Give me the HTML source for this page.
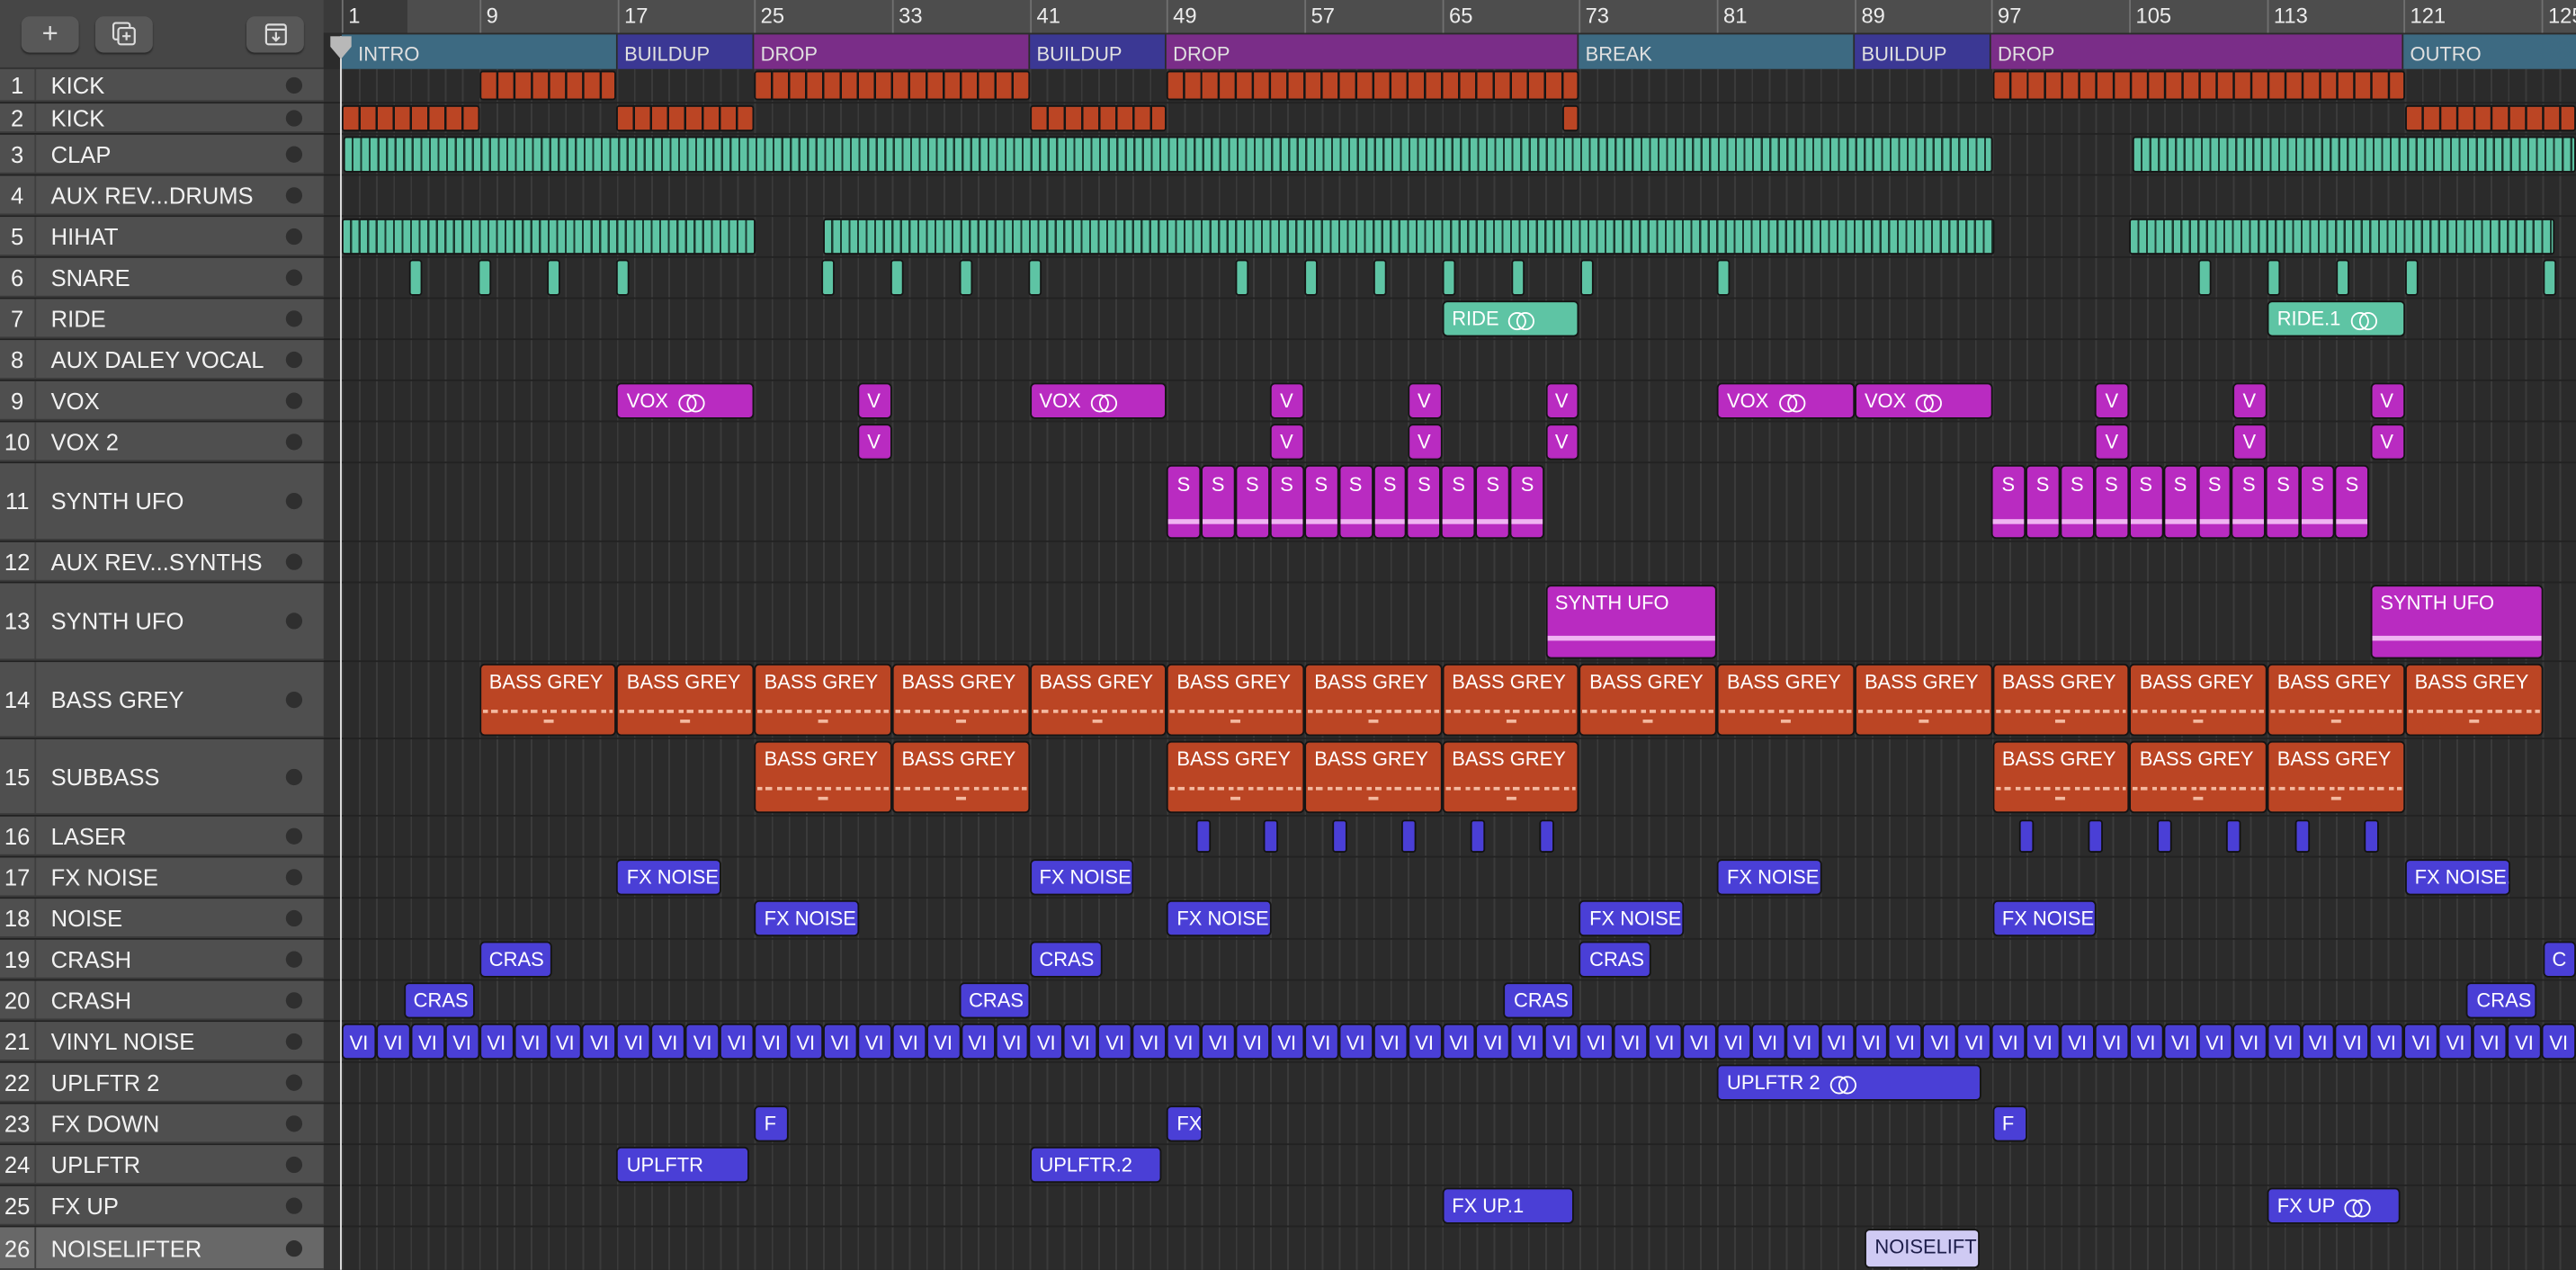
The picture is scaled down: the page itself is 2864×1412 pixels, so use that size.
<!DOCTYPE html>
<html><head><meta charset="utf-8"><style>
*{box-sizing:border-box;margin:0;padding:0}
html,body{width:2864px;height:1412px;overflow:hidden;background:#2b2b2b}
#root{position:absolute;left:0;top:0;width:1568px;height:773px;transform:scale(1.82653);transform-origin:0 0;font-family:"Liberation Sans",sans-serif;background:#2b2b2b;overflow:hidden}
#grid{position:absolute;left:208px;top:42px;right:0;bottom:0;background:repeating-linear-gradient(90deg,#3b3b3b 0 1px,transparent 1px 10.465px)}
.row{position:absolute;left:0;width:1568px;border-bottom:1px solid #222}
.hd{position:absolute;left:0;top:0;bottom:0;width:197px;background:#4f4f4f;border-bottom:1px solid #3a3a3a;color:#f2f2f2;font-size:14px}
.hd .n{position:absolute;left:0;width:22px;top:0;bottom:0;border-right:1px solid #3e3e3e;text-align:center;display:flex;align-items:center;justify-content:center}
.hd .t{position:absolute;left:31px;top:0;bottom:0;display:flex;align-items:center;white-space:nowrap}
.hd .d{position:absolute;left:174px;top:50%;margin-top:-5px;width:10px;height:10px;border-radius:50%;background:#2f2f2f}
.g{position:absolute;top:1px;bottom:1px;left:calc(208px + (var(--b) - 1)*10.465px);width:calc(var(--w)*10.465px);border:1px solid #141414;border-radius:3px;color:#fff;font-size:12px;padding:3px 0 0 5px;white-space:nowrap;overflow:hidden}
.o{background:#bb4524}.m{background:#b92bc1}.b{background:#4a3fd6}.tq{background:#5ec4a4}
.kk{position:absolute;top:1px;bottom:1px;left:calc(208px + (var(--b) - 1)*10.465px);width:calc(var(--w)*10.465px);background:repeating-linear-gradient(90deg,#bb4524 0 9.1px,#151515 9.1px 10.465px);border:1px solid #151515;border-radius:2px}
.st{position:absolute;top:1px;bottom:1px;border:1px solid #151515;border-radius:2px;background:repeating-linear-gradient(90deg,#5ec4a4 0 4px,#1c3a30 4px 5.23px)}
.lp{display:inline-block;width:15px;height:9px;position:relative;margin-left:6px;vertical-align:-1px}
.lp::before,.lp::after{content:"";position:absolute;top:0;width:9px;height:9px;border:1.3px solid #fff;border-radius:50%}
.lp::before{left:0}.lp::after{left:5px}
.bass::after{content:"";position:absolute;left:1px;right:1px;top:27px;height:2px;background:repeating-linear-gradient(90deg,#f4b9a0 0 3px,transparent 3px 5px,#f4b9a0 5px 9px,transparent 9px 12px)}
.bass::before{content:"";position:absolute;left:50%;margin-left:-3px;top:33px;width:6px;height:2px;background:#f4b9a0}
.flex{position:absolute;top:1px;bottom:1px;display:flex}
.flex span{flex:0 0 20.93px;border:1px solid #141414;border-radius:3px;color:#fff;font-size:12px;text-align:center;padding-top:4px;position:relative}
.vi span{background:#4a3fd6;padding-top:4px}
.ss span{background:#b92bc1}
.ss span::after{content:"";position:absolute;left:0;right:0;top:32px;height:3px;background:#f0b4f2}
.sn{position:absolute;top:1px;bottom:1px;width:8px;background:#5ec4a4;border:1px solid #151515;border-radius:2px}
.lz{position:absolute;top:2px;bottom:2px;width:9px;background:#4a3fd6;border:1px solid #111;border-radius:2px}
#top{position:absolute;left:0;top:0;width:197px;height:42px;background:#464646;border-bottom:1px solid #333}
.btn{position:absolute;top:10px;width:35px;height:22px;background:#585858;border-radius:5px;box-shadow:0 1px 1px #2a2a2a;color:#ddd;text-align:center;font-size:17px;line-height:21px}
#ruler{position:absolute;left:197px;top:0;right:0;height:20px;background:#4d4d4d}
.rl{position:absolute;top:0;height:20px;border-left:1px solid #707070;color:#ececec;font-size:13px;padding:2px 0 0 3px}
#mk{position:absolute;left:197px;top:20px;right:0;height:22px;background:#2b2b2b}
.sec{position:absolute;top:1px;height:21px;color:#e0e0e0;font-size:12px;padding:5px 0 0 4px;overflow:hidden;white-space:nowrap;border-right:1px solid #2b2b2b}
.si{background:#3d6a82}.sb{background:#3b3894}.sd{background:#7a2d88}
</style></head><body><div id="root">
<div id="grid"></div>
<div style="position:absolute;left:197px;top:42px;width:11px;bottom:0;background:#333"></div>

<div class="row" style="top:42px;height:21px"><div class="hd"><div class="n">1</div><div class="t">KICK</div><div class="d"></div></div>
<div class="kk" style="--b:9;--w:8"></div><div class="kk" style="--b:25;--w:16"></div><div class="kk" style="--b:49;--w:24"></div><div class="kk" style="--b:97;--w:24"></div></div>
<div class="row" style="top:63px;height:19px"><div class="hd"><div class="n">2</div><div class="t">KICK</div><div class="d"></div></div>
<div class="kk" style="--b:1;--w:8"></div><div class="kk" style="--b:17;--w:8"></div><div class="kk" style="--b:41;--w:8"></div><div class="kk" style="--b:72;--w:1"></div><div class="kk" style="--b:121;--w:10"></div></div>
<div class="row" style="top:82px;height:25px"><div class="hd"><div class="n">3</div><div class="t">CLAP</div><div class="d"></div></div>
<div class="st" style="left:209px;width:1004px"></div><div class="st" style="left:1298px;width:270px"></div></div>
<div class="row" style="top:107px;height:25px"><div class="hd"><div class="n">4</div><div class="t">AUX REV...DRUMS</div><div class="d"></div></div></div>
<div class="row" style="top:132px;height:25px"><div class="hd"><div class="n">5</div><div class="t">HIHAT</div><div class="d"></div></div>
<div class="st" style="left:208px;width:252px"></div><div class="st" style="left:501px;width:713px"></div><div class="st" style="left:1296px;width:259px"></div></div>
<div class="row" style="top:157px;height:25px"><div class="hd"><div class="n">6</div><div class="t">SNARE</div><div class="d"></div></div>
<div class="sn" style="left:249px"></div><div class="sn" style="left:291px"></div><div class="sn" style="left:333px"></div><div class="sn" style="left:375px"></div><div class="sn" style="left:500px"></div><div class="sn" style="left:542px"></div><div class="sn" style="left:584px"></div><div class="sn" style="left:626px"></div><div class="sn" style="left:752px"></div><div class="sn" style="left:794px"></div><div class="sn" style="left:836px"></div><div class="sn" style="left:878px"></div><div class="sn" style="left:920px"></div><div class="sn" style="left:962px"></div><div class="sn" style="left:1045px"></div><div class="sn" style="left:1338px"></div><div class="sn" style="left:1380px"></div><div class="sn" style="left:1422px"></div><div class="sn" style="left:1464px"></div><div class="sn" style="left:1548px"></div></div>
<div class="row" style="top:182px;height:25px"><div class="hd"><div class="n">7</div><div class="t">RIDE</div><div class="d"></div></div>
<div class="g tq" style="--b:65;--w:8">RIDE<i class="lp"></i></div><div class="g tq" style="--b:113;--w:8">RIDE.1<i class="lp"></i></div></div>
<div class="row" style="top:207px;height:25px"><div class="hd"><div class="n">8</div><div class="t">AUX DALEY VOCAL</div><div class="d"></div></div></div>
<div class="row" style="top:232px;height:25px"><div class="hd"><div class="n">9</div><div class="t">VOX</div><div class="d"></div></div>
<div class="g m" style="--b:17;--w:8">VOX<i class="lp"></i></div><div class="g m" style="--b:31;--w:2">V</div><div class="g m" style="--b:41;--w:8">VOX<i class="lp"></i></div><div class="g m" style="--b:55;--w:2">V</div><div class="g m" style="--b:63;--w:2">V</div><div class="g m" style="--b:71;--w:2">V</div><div class="g m" style="--b:81;--w:8">VOX<i class="lp"></i></div><div class="g m" style="--b:89;--w:8">VOX<i class="lp"></i></div><div class="g m" style="--b:103;--w:2">V</div><div class="g m" style="--b:111;--w:2">V</div><div class="g m" style="--b:119;--w:2">V</div></div>
<div class="row" style="top:257px;height:25px"><div class="hd"><div class="n">10</div><div class="t">VOX 2</div><div class="d"></div></div>
<div class="g m" style="--b:31;--w:2">V</div><div class="g m" style="--b:55;--w:2">V</div><div class="g m" style="--b:63;--w:2">V</div><div class="g m" style="--b:71;--w:2">V</div><div class="g m" style="--b:103;--w:2">V</div><div class="g m" style="--b:111;--w:2">V</div><div class="g m" style="--b:119;--w:2">V</div></div>
<div class="row" style="top:282px;height:48px"><div class="hd"><div class="n">11</div><div class="t">SYNTH UFO</div><div class="d"></div></div>
<div class="flex ss" style="left:710px"><span>S</span><span>S</span><span>S</span><span>S</span><span>S</span><span>S</span><span>S</span><span>S</span><span>S</span><span>S</span><span>S</span></div>
<div class="flex ss" style="left:1212px"><span>S</span><span>S</span><span>S</span><span>S</span><span>S</span><span>S</span><span>S</span><span>S</span><span>S</span><span>S</span><span>S</span></div></div>
<div class="row" style="top:330px;height:25px"><div class="hd"><div class="n">12</div><div class="t">AUX REV...SYNTHS</div><div class="d"></div></div></div>
<div class="row" style="top:355px;height:48px"><div class="hd"><div class="n">13</div><div class="t">SYNTH UFO</div><div class="d"></div></div>
<div class="g m" style="--b:71;--w:10">SYNTH UFO<div style="position:absolute;left:0;right:0;top:30px;height:3px;background:#f0b4f2"></div></div><div class="g m" style="--b:119;--w:10">SYNTH UFO<div style="position:absolute;left:0;right:0;top:30px;height:3px;background:#f0b4f2"></div></div></div>
<div class="row" style="top:403px;height:47px"><div class="hd"><div class="n">14</div><div class="t">BASS GREY</div><div class="d"></div></div>
<div class="g o bass" style="--b:9;--w:8">BASS GREY</div><div class="g o bass" style="--b:17;--w:8">BASS GREY</div><div class="g o bass" style="--b:25;--w:8">BASS GREY</div><div class="g o bass" style="--b:33;--w:8">BASS GREY</div><div class="g o bass" style="--b:41;--w:8">BASS GREY</div><div class="g o bass" style="--b:49;--w:8">BASS GREY</div><div class="g o bass" style="--b:57;--w:8">BASS GREY</div><div class="g o bass" style="--b:65;--w:8">BASS GREY</div><div class="g o bass" style="--b:73;--w:8">BASS GREY</div><div class="g o bass" style="--b:81;--w:8">BASS GREY</div><div class="g o bass" style="--b:89;--w:8">BASS GREY</div><div class="g o bass" style="--b:97;--w:8">BASS GREY</div><div class="g o bass" style="--b:105;--w:8">BASS GREY</div><div class="g o bass" style="--b:113;--w:8">BASS GREY</div><div class="g o bass" style="--b:121;--w:8">BASS GREY</div></div>
<div class="row" style="top:450px;height:47px"><div class="hd"><div class="n">15</div><div class="t">SUBBASS</div><div class="d"></div></div>
<div class="g o bass" style="--b:25;--w:8">BASS GREY</div><div class="g o bass" style="--b:33;--w:8">BASS GREY</div><div class="g o bass" style="--b:49;--w:8">BASS GREY</div><div class="g o bass" style="--b:57;--w:8">BASS GREY</div><div class="g o bass" style="--b:65;--w:8">BASS GREY</div><div class="g o bass" style="--b:97;--w:8">BASS GREY</div><div class="g o bass" style="--b:105;--w:8">BASS GREY</div><div class="g o bass" style="--b:113;--w:8">BASS GREY</div></div>
<div class="row" style="top:497px;height:25px"><div class="hd"><div class="n">16</div><div class="t">LASER</div><div class="d"></div></div>
<div class="lz" style="left:728px"></div><div class="lz" style="left:769px"></div><div class="lz" style="left:811px"></div><div class="lz" style="left:853px"></div><div class="lz" style="left:895px"></div><div class="lz" style="left:937px"></div><div class="lz" style="left:1229px"></div><div class="lz" style="left:1271px"></div><div class="lz" style="left:1313px"></div><div class="lz" style="left:1355px"></div><div class="lz" style="left:1397px"></div><div class="lz" style="left:1439px"></div></div>
<div class="row" style="top:522px;height:25px"><div class="hd"><div class="n">17</div><div class="t">FX NOISE</div><div class="d"></div></div>
<div class="g b" style="--b:17;--w:6.1">FX NOISE</div><div class="g b" style="--b:41;--w:6.1">FX NOISE.</div><div class="g b" style="--b:81;--w:6.1">FX NOISE.</div><div class="g b" style="--b:121;--w:6.1">FX NOISE.</div></div>
<div class="row" style="top:547px;height:25px"><div class="hd"><div class="n">18</div><div class="t">NOISE</div><div class="d"></div></div>
<div class="g b" style="--b:25;--w:6.1">FX NOISE.</div><div class="g b" style="--b:49;--w:6.1">FX NOISE.</div><div class="g b" style="--b:73;--w:6.1">FX NOISE</div><div class="g b" style="--b:97;--w:6.1">FX NOISE</div></div>
<div class="row" style="top:572px;height:25px"><div class="hd"><div class="n">19</div><div class="t">CRASH</div><div class="d"></div></div>
<div class="g b" style="--b:9;--w:4.2">CRAS</div><div class="g b" style="--b:41;--w:4.2">CRAS</div><div class="g b" style="--b:73;--w:4.2">CRAS</div><div class="g b" style="--b:129;--w:2">C</div></div>
<div class="row" style="top:597px;height:25px"><div class="hd"><div class="n">20</div><div class="t">CRASH</div><div class="d"></div></div>
<div class="g b" style="--b:4.6;--w:4.1">CRAS</div><div class="g b" style="--b:36.9;--w:4.1">CRAS</div><div class="g b" style="--b:68.6;--w:4.1">CRAS</div><div class="g b" style="--b:124.6;--w:4.1">CRAS</div></div>
<div class="row" style="top:622px;height:25px"><div class="hd"><div class="n">21</div><div class="t">VINYL NOISE</div><div class="d"></div></div>
<div class="flex vi" style="left:208px"><span>VI</span><span>VI</span><span>VI</span><span>VI</span><span>VI</span><span>VI</span><span>VI</span><span>VI</span><span>VI</span><span>VI</span><span>VI</span><span>VI</span><span>VI</span><span>VI</span><span>VI</span><span>VI</span><span>VI</span><span>VI</span><span>VI</span><span>VI</span><span>VI</span><span>VI</span><span>VI</span><span>VI</span><span>VI</span><span>VI</span><span>VI</span><span>VI</span><span>VI</span><span>VI</span><span>VI</span><span>VI</span><span>VI</span><span>VI</span><span>VI</span><span>VI</span><span>VI</span><span>VI</span><span>VI</span><span>VI</span><span>VI</span><span>VI</span><span>VI</span><span>VI</span><span>VI</span><span>VI</span><span>VI</span><span>VI</span><span>VI</span><span>VI</span><span>VI</span><span>VI</span><span>VI</span><span>VI</span><span>VI</span><span>VI</span><span>VI</span><span>VI</span><span>VI</span><span>VI</span><span>VI</span><span>VI</span><span>VI</span><span>VI</span><span>VI</span></div></div>
<div class="row" style="top:647px;height:25px"><div class="hd"><div class="n">22</div><div class="t">UPLFTR 2</div><div class="d"></div></div>
<div class="g b" style="--b:81;--w:15.4">UPLFTR 2<i class="lp"></i></div></div>
<div class="row" style="top:672px;height:25px"><div class="hd"><div class="n">23</div><div class="t">FX DOWN</div><div class="d"></div></div>
<div class="g b" style="--b:25;--w:2">F</div><div class="g b" style="--b:49;--w:2.1">FX</div><div class="g b" style="--b:97;--w:2">F</div></div>
<div class="row" style="top:697px;height:25px"><div class="hd"><div class="n">24</div><div class="t">UPLFTR</div><div class="d"></div></div>
<div class="g b" style="--b:17;--w:7.7">UPLFTR</div><div class="g b" style="--b:41;--w:7.7">UPLFTR.2</div></div>
<div class="row" style="top:722px;height:25px"><div class="hd"><div class="n">25</div><div class="t">FX UP</div><div class="d"></div></div>
<div class="g b" style="--b:65;--w:7.7">FX UP.1</div><div class="g b" style="--b:113;--w:7.7">FX UP<i class="lp"></i></div></div>
<div class="row" style="top:747px;height:26px;border:none"><div class="hd" style="background:#686868"><div class="n">26</div><div class="t">NOISELIFTER</div><div class="d"></div></div>
<div class="g" style="--b:89.6;--w:6.7;background:#cfcaf3;color:#1d1d4a">NOISELIFT</div></div>

<div id="top"><div class="btn" style="left:13px">+</div><div class="btn" style="left:58px"><svg width="18" height="16" viewBox="0 0 18 16" style="margin-top:3px"><rect x="2" y="1" width="10" height="10" rx="1.5" fill="none" stroke="#ddd" stroke-width="1.2"/><rect x="5" y="4" width="10" height="10" rx="1.5" fill="#585858" stroke="#ddd" stroke-width="1.2"/><path d="M10 6.5v5M7.5 9h5" stroke="#ddd" stroke-width="1.2"/></svg></div><div class="btn" style="left:150px"><svg width="16" height="16" viewBox="0 0 16 16" style="margin-top:3px"><rect x="2" y="2" width="12" height="12" rx="1.5" fill="none" stroke="#ddd" stroke-width="1.2"/><path d="M2 5h12M8 6.5v5M5.8 9.5 8 11.7l2.2-2.2" fill="none" stroke="#ddd" stroke-width="1.2"/></svg></div></div>
<div id="ruler"><div style="position:absolute;left:0;top:0;width:51px;height:20px;background:#3a3a3a"></div>
<div class="rl" style="left:11px">1</div><div class="rl" style="left:95px">9</div><div class="rl" style="left:179px">17</div><div class="rl" style="left:262px">25</div><div class="rl" style="left:346px">33</div><div class="rl" style="left:430px">41</div><div class="rl" style="left:513px">49</div><div class="rl" style="left:597px">57</div><div class="rl" style="left:681px">65</div><div class="rl" style="left:764px">73</div><div class="rl" style="left:848px">81</div><div class="rl" style="left:932px">89</div><div class="rl" style="left:1015px">97</div><div class="rl" style="left:1099px">105</div><div class="rl" style="left:1183px">113</div><div class="rl" style="left:1266px">121</div><div class="rl" style="left:1350px">125</div></div>
<div id="mk">
<div class="sec si" style="left:11px;width:168px;padding-left:10px">INTRO</div>
<div class="sec sb" style="left:179px;width:83px">BUILDUP</div>
<div class="sec sd" style="left:262px;width:168px">DROP</div>
<div class="sec sb" style="left:430px;width:83px">BUILDUP</div>
<div class="sec sd" style="left:513px;width:251px">DROP</div>
<div class="sec si" style="left:764px;width:168px">BREAK</div>
<div class="sec sb" style="left:932px;width:83px">BUILDUP</div>
<div class="sec sd" style="left:1015px;width:251px">DROP</div>
<div class="sec si" style="left:1266px;width:110px">OUTRO</div></div>
<div style="position:absolute;left:207px;top:22px;width:1px;bottom:0;background:#e8e8e8"></div>
<div style="position:absolute;left:201px;top:22px;width:13px;height:14px;background:#b8b8b8;clip-path:polygon(0 0,100% 0,100% 45%,50% 100%,0 45%)"></div>
</div></body></html>
